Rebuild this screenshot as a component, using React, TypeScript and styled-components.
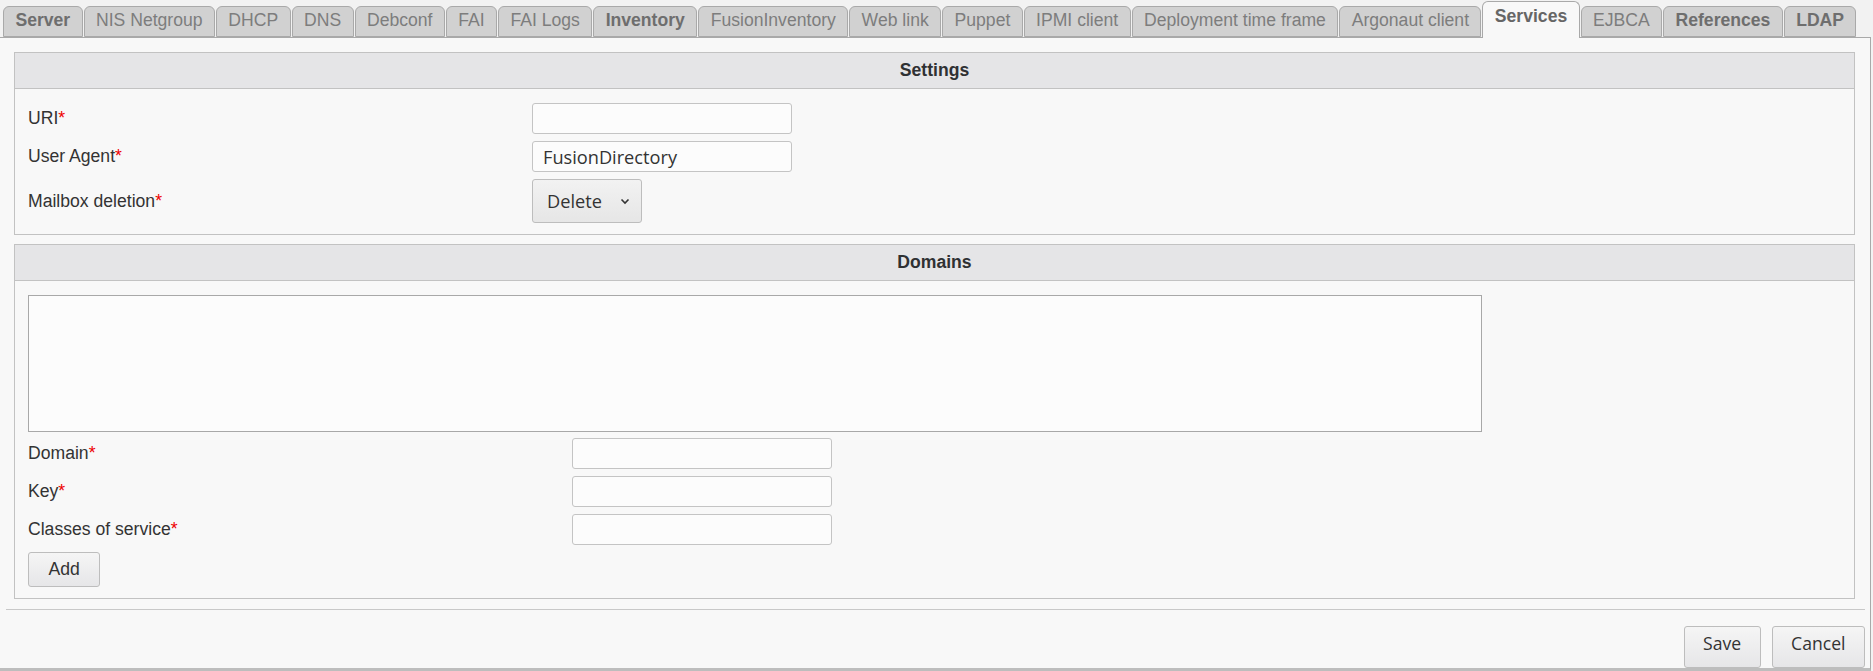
import React from "react";
import styled, { createGlobalStyle } from "styled-components";

const GlobalStyle = createGlobalStyle`
  html, body {
    margin: 0;
    padding: 0;
    background: #f2f2f2;
  }
  body {
    font-family: "Liberation Sans", Arial, sans-serif;
    font-size: 17.6px;
    color: #333;
  }
`;

interface Tab {
  label: string;
  bold?: boolean;
  active?: boolean;
}

const tabs: Tab[] = [
  { label: "Server", bold: true },
  { label: "NIS Netgroup" },
  { label: "DHCP" },
  { label: "DNS" },
  { label: "Debconf" },
  { label: "FAI" },
  { label: "FAI Logs" },
  { label: "Inventory", bold: true },
  { label: "FusionInventory" },
  { label: "Web link" },
  { label: "Puppet" },
  { label: "IPMI client" },
  { label: "Deployment time frame" },
  { label: "Argonaut client" },
  { label: "Services", bold: true, active: true },
  { label: "EJBCA" },
  { label: "References", bold: true },
  { label: "LDAP", bold: true }
];

const Page = styled.div`
  width: 1873px;
  height: 671px;
  overflow: hidden;
`;

const TabBar = styled.ul`
  display: flex;
  align-items: flex-end;
  gap: 1px;
  margin: 0;
  padding: 0 0 0 3px;
  height: 37px;
  list-style: none;
`;

const TabItem = styled.li<{ $bold?: boolean; $active?: boolean }>`
  box-sizing: border-box;
  flex: none;
  height: ${(p) => (p.$active ? "37px" : "31px")};
  padding: ${(p) => (p.$active ? "3px 11.4px 0" : "2px 11.4px 0")};
  border: 1px solid #a9a9a9;
  border-bottom: ${(p) => (p.$active ? "none" : "1px solid #a9a9a9")};
  border-radius: 6px 6px 0 0;
  background: ${(p) => (p.$active ? "#f8f8f8" : "#d1d1d1")};
  color: ${(p) => (p.$active ? "#666" : p.$bold ? "#6e6e6e" : "#7d7d7d")};
  font-weight: ${(p) => (p.$bold ? "bold" : "normal")};
  font-size: 17.6px;
  line-height: 22px;
  white-space: nowrap;
  position: relative;
  z-index: ${(p) => (p.$active ? 2 : 1)};
  margin-bottom: ${(p) => (p.$active ? "-1px" : "0")};
`;

const Content = styled.div`
  box-sizing: border-box;
  width: 1871px;
  background: #f8f8f8;
  border-top: 1px solid #a9a9a9;
  border-right: 1px solid #a9a9a9;
  border-bottom: 3px solid #bdbdbd;
  padding: 14px 15px 0 14px;
`;

const Fieldset = styled.section`
  border: 1px solid #c2c2c2;
  margin-bottom: 9px;
`;

const Legend = styled.h2`
  margin: 0;
  height: 35px;
  line-height: 34px;
  background: #e5e5e7;
  border-bottom: 1px solid #c2c2c2;
  text-align: center;
  font-size: 17.6px;
  font-weight: bold;
  color: #2f3133;
`;

const Body = styled.div`
  padding: 14px 13px 11px;
  display: flex;
  flex-direction: column;
  gap: 7px;
`;

const Row = styled.div<{ $labelWidth: number }>`
  display: grid;
  grid-template-columns: ${(p) => p.$labelWidth}px auto;
  align-items: center;
`;

const Label = styled.label`
  color: #333;
  font-size: 17.6px;
`;

const Required = styled.span`
  color: #e00;
`;

const TextInput = styled.input`
  box-sizing: border-box;
  width: 260px;
  height: 31px;
  border: 1px solid #c4c4c4;
  border-radius: 3px;
  background: #fcfcfc;
  padding: 0 10px;
  font-family: "Open Sans", sans-serif;
  font-size: 18.2px;
  color: #333;
  outline: none;
`;

const SelectBox = styled.div`
  box-sizing: border-box;
  width: 110px;
  height: 44px;
  display: flex;
  align-items: center;
  justify-content: space-between;
  padding: 0 11px 0 14px;
  border: 1px solid #bdbdbd;
  border-radius: 3px;
  background: linear-gradient(#f2f2f2, #e6e6e6);
  font-family: "Open Sans", sans-serif;
  font-size: 18.2px;
  color: #333;
`;

const ListArea = styled.div`
  box-sizing: border-box;
  width: 1454px;
  height: 137px;
  border: 1px solid #a8a8a8;
  background: #fcfcfc;
  margin-bottom: -1px;
`;

const AddButton = styled.button`
  box-sizing: border-box;
  height: 35px;
  padding: 0 19.5px;
  border: 1px solid #bdbdbd;
  border-radius: 3px;
  background: linear-gradient(#f5f5f5, #e6e6e8);
  font-family: "Liberation Sans", Arial, sans-serif;
  font-size: 17.6px;
  color: #333;
  cursor: pointer;
`;

const ActionButton = styled.button`
  box-sizing: border-box;
  height: 42px;
  padding: 3px 18.5px 11px;
  line-height: 24px;
  border: 1px solid #bdbdbd;
  border-radius: 3px;
  background: linear-gradient(#f5f5f5, #e6e6e8);
  font-family: "Open Sans", sans-serif;
  font-size: 17.6px;
  color: #333;
  cursor: pointer;
`;

const AddRow = styled.div`
  display: flex;
`;

const Footer = styled.div`
  margin: 10px -10px 0 -8px;
  border-top: 1px solid #c8c8c8;
  padding-top: 16px;
  display: flex;
  justify-content: flex-end;
  gap: 11px;
`;

const Chevron = () => (
  <svg width="10" height="7" viewBox="0 0 10 7">
    <path d="M1.5 1.5 L5 5 L8.5 1.5" fill="none" stroke="#333" strokeWidth="1.6" />
  </svg>
);

const Field = ({ label, width, children }: { label: string; width: number; children: React.ReactNode }) => (
  <Row $labelWidth={width}>
    <Label>
      {label}
      <Required>*</Required>
    </Label>
    <div>{children}</div>
  </Row>
);

const App = () => {
  return (
    <Page>
      <GlobalStyle />
      <TabBar>
        {tabs.map((t) => (
          <TabItem key={t.label} $bold={t.bold} $active={t.active}>
            {t.label}
          </TabItem>
        ))}
      </TabBar>
      <Content>
        <Fieldset>
          <Legend>Settings</Legend>
          <Body>
            <Field label="URI" width={504}>
              <TextInput type="text" defaultValue="" />
            </Field>
            <Field label="User Agent" width={504}>
              <TextInput type="text" defaultValue="FusionDirectory" />
            </Field>
            <Field label="Mailbox deletion" width={504}>
              <SelectBox>
                Delete
                <Chevron />
              </SelectBox>
            </Field>
          </Body>
        </Fieldset>
        <Fieldset>
          <Legend>Domains</Legend>
          <Body>
            <ListArea />
            <Field label="Domain" width={544}>
              <TextInput type="text" />
            </Field>
            <Field label="Key" width={544}>
              <TextInput type="text" />
            </Field>
            <Field label="Classes of service" width={544}>
              <TextInput type="text" />
            </Field>
            <AddRow>
              <AddButton>Add</AddButton>
            </AddRow>
          </Body>
        </Fieldset>
        <Footer>
          <ActionButton>Save</ActionButton>
          <ActionButton>Cancel</ActionButton>
        </Footer>
      </Content>
    </Page>
  );
};

export default App;
